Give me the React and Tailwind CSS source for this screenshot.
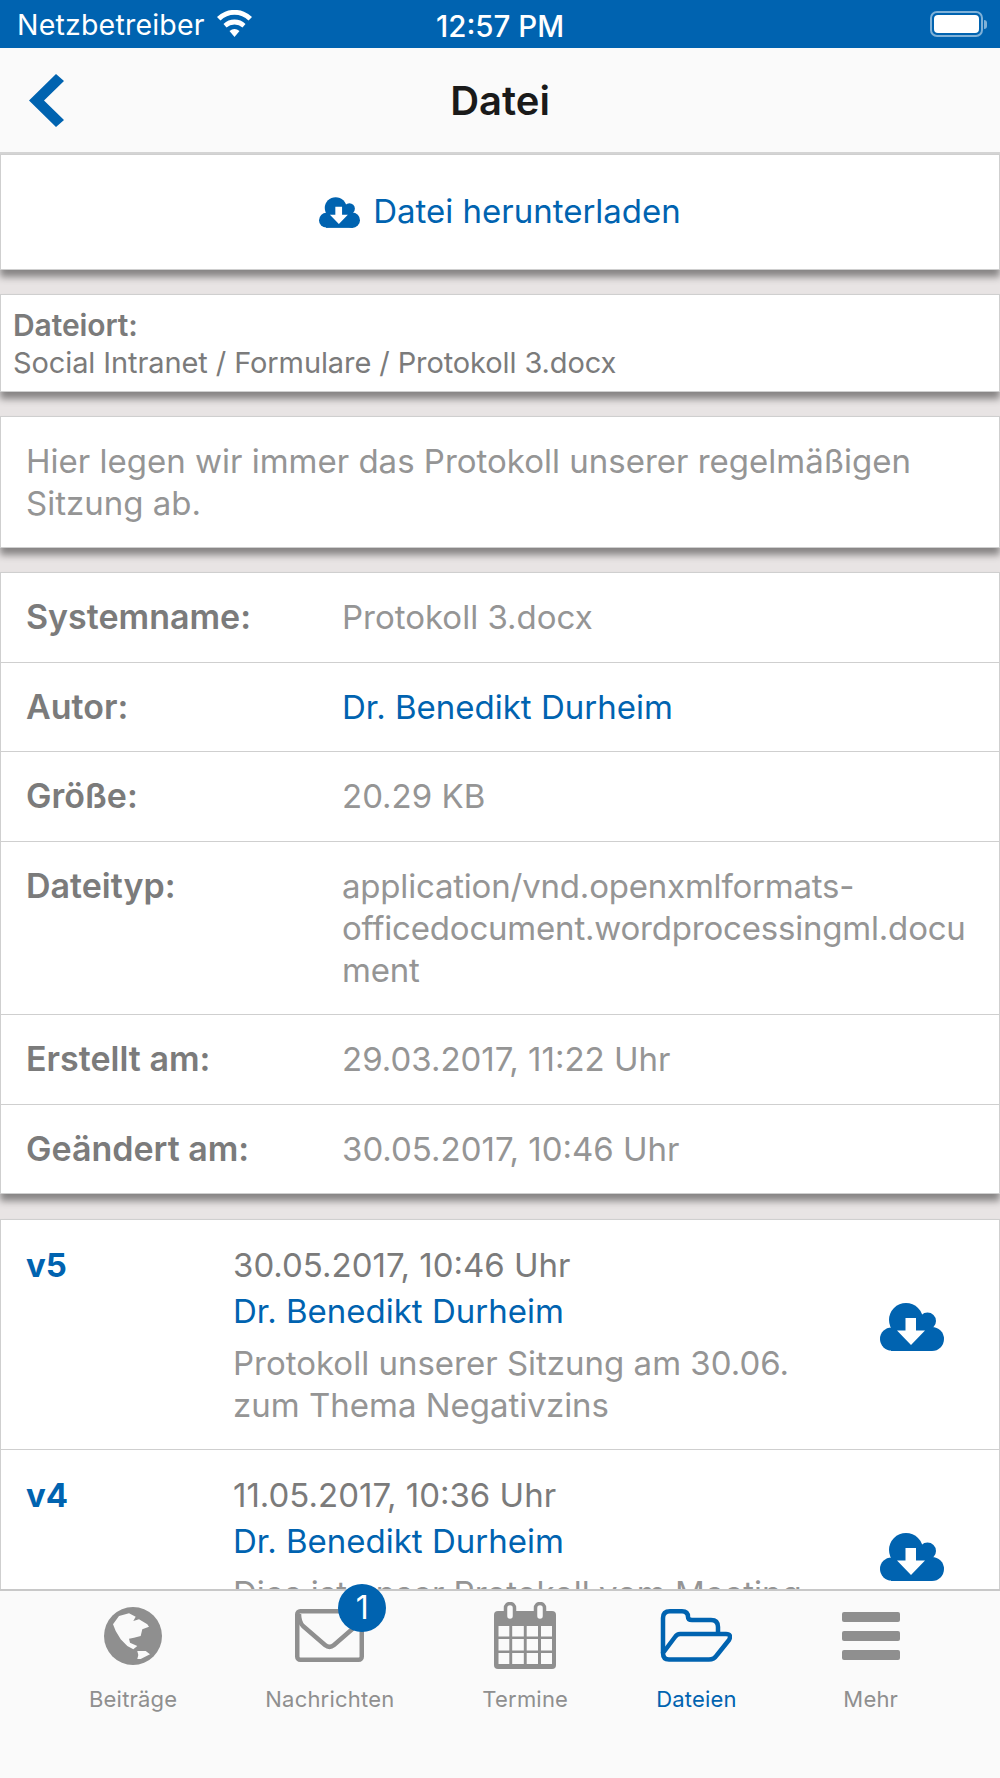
import React from 'react';

const rows = [
  { label: 'Systemname:', value: 'Protokoll 3.docx' },
  { label: 'Autor:', value: 'Dr. Benedikt Durheim', link: true },
  { label: 'Größe:', value: '20.29 KB' },
  { label: 'Dateityp:', lines: ['application/vnd.openxmlformats-', 'officedocument.wordprocessingml.docu', 'ment'] },
  { label: 'Erstellt am:', value: '29.03.2017, 11:22 Uhr' },
  { label: 'Geändert am:', value: '30.05.2017, 10:46 Uhr' },
];

const versions = [
  { v: 'v5', date: '30.05.2017, 10:46 Uhr', text: ['Protokoll unserer Sitzung am 30.06.', 'zum Thema Negativzins'] },
  { v: 'v4', date: '11.05.2017, 10:36 Uhr', text: ['Dies ist unser Protokoll vom Meeting', 'im Mai'] },
];

function CloudDownload({ width, height, className = '' }) {
  return (
    <svg className={`shrink-0 ${className}`} width={width} height={height} viewBox="0 0 64 48" fill="#0063b0">
      <circle cx="26" cy="17" r="17" />
      <circle cx="47.5" cy="18" r="8.5" />
      <circle cx="11.5" cy="36" r="11.5" />
      <circle cx="52" cy="36" r="12" />
      <rect x="11" y="20" width="41" height="28" />
      <path d="M25.5 15 H36 V27.5 H45 L31 42 L17 27.5 H25.5 Z" fill="#fff" />
    </svg>
  );
}

function GlobeIcon() {
  return (
    <svg width="58" height="58" viewBox="0 0 58 58">
      <circle cx="29" cy="29" r="29" fill="#8f8f8f" />
      <path
        fill="#fafafa"
        d="M9 17.3 L15 9 L25 6.3 L31.7 9.7 L29.3 14 L35 12.3 L43.3 17.3 L45 19.7 L38.3 22.3 L36.7 29 L30 30.7 L25 31.7 L26 35.7 L33.3 39 L29.3 42.3 L23.3 39 L16.7 32.3 L11.7 24 Z"
      />
      <path fill="#fafafa" d="M33.3 44 L41.7 44 L46 47.3 L36.7 52 L33.3 52 L34.3 48 Z" />
    </svg>
  );
}

function EnvelopeIcon() {
  return (
    <svg width="69" height="53" viewBox="0 0 69 53" fill="none" stroke="#8f8f8f" strokeWidth="4.5" strokeLinejoin="round">
      <rect x="2.25" y="2.25" width="64.5" height="48.5" rx="3" />
      <path d="M4 5 C4 11 5 14 8 17 L30 36 C33 38.5 36 38.5 39 36 L62 16" />
    </svg>
  );
}

function CalendarIcon() {
  return (
    <svg width="62" height="67" viewBox="0 0 62 67">
      <rect x="0" y="9" width="62" height="58" rx="4" fill="#8f8f8f" />
      <rect x="11.5" y="1.5" width="9" height="17" rx="4.5" fill="#fafafa" stroke="#8f8f8f" strokeWidth="3.5" />
      <rect x="41.5" y="1.5" width="9" height="17" rx="4.5" fill="#fafafa" stroke="#8f8f8f" strokeWidth="3.5" />
      {[[24, 10.5], [37, 11.5], [51, 11]].map(([y, h]) =>
        [[4.5, 10.8], [18.2, 11.6], [32.7, 11.3], [47, 11]].map(([x, w]) => (
          <rect key={`${x}-${y}`} x={x} y={y} width={w} height={h} fill="#fafafa" />
        ))
      )}
    </svg>
  );
}

function FolderIcon() {
  return (
    <svg width="72" height="53" viewBox="0 0 72 53" fill="none" stroke="#0063b0" strokeWidth="4.5" strokeLinejoin="round">
      <path d="M3 44 V9 Q3 2.25 10 2.25 H22 Q28 2.25 28 8 Q28 11 32 11 H51 Q58 11 58 18 V25" />
      <path d="M20 25 H66 Q72 25 69 31 L57 46 Q54 50.5 49 50.5 H9 Q3 50.5 3 44 L15 28 Q17 25 20 25 Z" />
    </svg>
  );
}

function Card({ className = '', children }) {
  return (
    <div className={`bg-white border border-[#cfcfcf] shadow-[0_7px_7px_rgba(0,0,0,0.42)] ${className}`}>
      {children}
    </div>
  );
}

function Tab({ label, active, icon, className = '' }) {
  return (
    <div className={`flex flex-col items-center ${className}`}>
      <div className="relative flex items-center justify-center h-[67px]">{icon}</div>
      <span className={`mt-[18px] text-[22px] leading-[24px] tracking-[0.2px] ${active ? 'text-[#0063b0]' : 'text-[#8f8f8f]'}`}>{label}</span>
    </div>
  );
}

export default function App() {
  return (
    <div className="w-[1000px] h-[1778px] flex flex-col overflow-hidden bg-[#e8e4e4] font-['Inter',sans-serif]">
      {/* status bar */}
      <div className="h-[48px] shrink-0 bg-[#0063b0] text-white flex items-center pl-[17px] pr-[13px] relative">
        <span className="text-[28.5px] tracking-[0.2px] leading-none mt-[2px]">Netzbetreiber</span>
        <svg className="ml-[11px] mb-[2px]" width="37" height="27" viewBox="0 0 37 27" fill="#fff">
          <path d="M18.5 27 L13.5 21 A8 8 0 0 1 23.5 21 Z" />
          <path d="M10.5 17.5 L7.5 14 A16 16 0 0 1 29.5 14 L26.5 17.5 A12 12 0 0 0 10.5 17.5 Z" />
          <path d="M4.5 10.5 L1 7 A25 25 0 0 1 36 7 L32.5 10.5 A20 20 0 0 0 4.5 10.5 Z" />
        </svg>
        <span className="absolute left-[436px] top-[12px] text-[29.5px] font-medium leading-none">12:57 PM</span>
        <div className="ml-auto flex items-center">
          <div className="w-[53px] h-[26px] rounded-[7px] border-2 border-[#7fb1d8] p-[2px]">
            <div className="w-full h-full rounded-[4px] bg-white" />
          </div>
          <div className="w-[3px] h-[9px] ml-[1px] rounded-r bg-[#7fb1d8]" />
        </div>
      </div>

      {/* nav bar */}
      <div className="h-[106px] shrink-0 bg-[#fafafa] flex items-center relative border-b-2 border-[#d4d4d4]">
        <svg className="ml-[29px]" width="35" height="53" viewBox="0 0 35 53" fill="#0063b0">
          <path d="M27 0 L35 7 L15 26.5 L35 46 L27 53 L0 26.5 Z" />
        </svg>
        <span className="absolute inset-x-0 top-[27px] text-center text-[40px] leading-[52px] font-semibold text-[#1a1a1a]">Datei</span>
      </div>

      {/* scrolling content */}
      <div className="flex-1 min-h-0 overflow-hidden flex flex-col gap-[24px]">
        <Card className="h-[116px] shrink-0 flex items-center justify-center gap-[13px] text-[#0063b0]">
          <CloudDownload width={41} height={31} />
          <span className="text-[33px]">Datei herunterladen</span>
        </Card>

        <Card className="h-[98px] shrink-0 px-[12px] pt-[12px] text-[#7b7b7b] text-[29px] leading-[37px] tracking-[-0.1px]">
          <div className="font-semibold text-[30px]">Dateiort:</div>
          <div>Social Intranet / Formulare / Protokoll 3.docx</div>
        </Card>

        <Card className="h-[132px] shrink-0 px-[25px] pt-[23px] text-[#959595] text-[33px] leading-[42px]">
          Hier legen wir immer das Protokoll unserer regelmäßigen Sitzung ab.
        </Card>

        <Card className="shrink-0">
          {rows.map((row, i) => (
            <div key={row.label} className={`flex px-[25px] py-[23.25px] text-[33px] leading-[42px] ${i > 0 ? 'border-t border-[#cfcfcf]' : ''}`}>
              <div className="w-[316px] shrink-0 font-semibold text-[34px] text-[#7b7b7b]">{row.label}</div>
              <div className={row.link ? 'text-[#0063b0]' : 'text-[#959595]'}>
                {row.lines ? row.lines.map((l) => <div key={l} className="tracking-[-0.2px]">{l}</div>) : row.value}
              </div>
            </div>
          ))}
        </Card>

        <Card className="shrink-0 mt-[1px]">
          {versions.map((item, i) => (
            <div key={item.v} className={`flex pl-[25px] pr-[55px] ${i > 0 ? 'h-[230px] border-t border-[#cfcfcf] pt-[24px]' : 'h-[229px] pt-[24px]'}`}>
              <div className="w-[207px] shrink-0 font-bold text-[#0063b0] text-[33px] leading-[42px]">{item.v}</div>
              <div className="flex-1 text-[33px] leading-[42px]">
                <div className="text-[#7b7b7b]">{item.date}</div>
                <div className="text-[#0063b0] mt-[4px]">Dr. Benedikt Durheim</div>
                <div className="text-[#959595] mt-[10px]">
                  {item.text.map((t) => <div key={t}>{t}</div>)}
                </div>
              </div>
              <CloudDownload width={64} height={48} className="mt-[59px]" />
            </div>
          ))}
        </Card>
      </div>

      {/* tab bar */}
      <div className="h-[189px] shrink-0 bg-[#fafafa] border-t-2 border-[#c8c8c8] flex items-start relative pl-[89px] pt-[11px]">
        <Tab label="Beiträge" icon={<GlobeIcon />} />
        <Tab
          label="Nachrichten"
          className="ml-[88px]"
          icon={
            <>
              <EnvelopeIcon />
              <span className="absolute left-[43px] top-[-18px] w-[48px] h-[48px] rounded-full bg-[#0063b0] text-white text-[32px] flex items-center justify-center">1</span>
            </>
          }
        />
        <Tab label="Termine" className="ml-[88px]" icon={<CalendarIcon />} />
        <Tab label="Dateien" className="ml-[88px]" active icon={<FolderIcon />} />
        <Tab
          label="Mehr"
          className="ml-[105px]"
          icon={
            <div className="w-[58px] flex flex-col gap-[9px]">
              <div className="h-[10px] rounded-[2px] bg-[#8f8f8f]" />
              <div className="h-[10px] rounded-[2px] bg-[#8f8f8f]" />
              <div className="h-[10px] rounded-[2px] bg-[#8f8f8f]" />
            </div>
          }
        />
      </div>
    </div>
  );
}
